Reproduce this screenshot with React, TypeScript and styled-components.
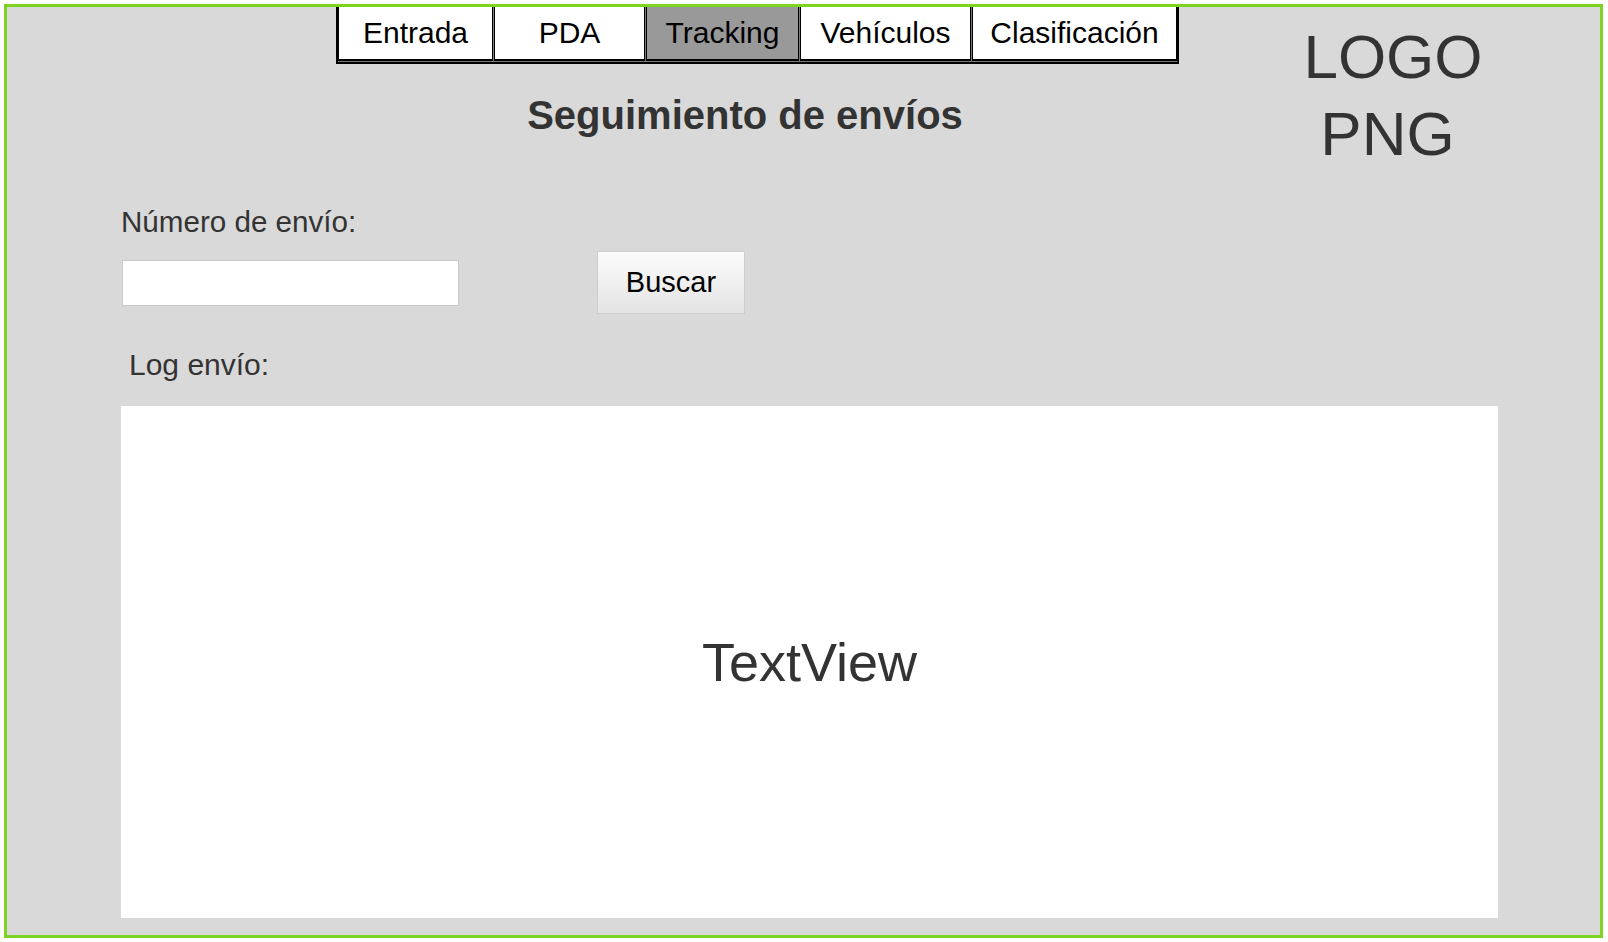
import React from "react";
import styled, { createGlobalStyle } from "styled-components";

const GlobalStyle = createGlobalStyle`
  html, body {
    margin: 0;
    padding: 0;
    background: #ffffff;
  }
  body {
    font-family: "Liberation Sans", Arial, sans-serif;
  }
  * { box-sizing: border-box; }
`;

const Frame = styled.div`
  margin: 4px 5px 4px 4px;
  height: 934px;
  border: 3px solid #7ed321;
  background: #d9d9d9;
  display: flex;
  flex-direction: column;
  color: #333333;
`;

const Header = styled.header`
  display: flex;
  align-items: flex-start;
  padding: 0 0 0 329px;
`;

const NavColumn = styled.div`
  display: flex;
  flex-direction: column;
  align-items: stretch;
`;

const TabBar = styled.nav`
  display: flex;
  gap: 1px;
  background: #7a7a7a;
  border: 2px solid #000;
  border-top: 0;
  padding: 0 0 1px;
`;

const Tab = styled.div<{ $w: number; $active?: boolean }>`
  width: ${(p) => p.$w}px;
  height: 54px;
  display: flex;
  align-items: center;
  justify-content: center;
  background: ${(p) => (p.$active ? "#999999" : "#ffffff")};
  border: 1px solid #000;
  border-top: 0;
  border-bottom-width: 2px;
  font-size: 30px;
  color: #000;
`;

const Title = styled.h1`
  margin: 28px 25px 0 0;
  font-size: 40px;
  font-weight: bold;
  text-align: center;
  line-height: 1.15;
  color: #333;
`;

const Logo = styled.div`
  margin: 11px 0 0 114px;
  width: 200px;
  text-align: center;
  font-size: 62px;
  line-height: 77px;
  color: #333;
`;

const LogoLine = styled.span<{ $shift?: number }>`
  display: block;
  margin-right: ${(p) => p.$shift ?? 0}px;
`;

const Form = styled.section`
  display: flex;
  flex-direction: column;
  padding: 0 102px 0 114px;
`;

const Label = styled.label<{ $indent?: number; $top: number; $size: number }>`
  display: block;
  margin-top: ${(p) => p.$top}px;
  margin-left: ${(p) => p.$indent ?? 0}px;
  font-size: ${(p) => p.$size}px;
  line-height: 1.15;
  color: #333;
`;

const SearchRow = styled.div`
  display: flex;
  align-items: center;
  gap: 138px;
  margin-top: 12px;
`;

const Input = styled.input`
  margin-left: 1px;
  width: 337px;
  height: 46px;
  border: 1px solid #c9c9c9;
  background: #fff;
  font-size: 24px;
  font-family: "Liberation Sans", Arial, sans-serif;
  outline: none;
`;

const Button = styled.button`
  width: 148px;
  height: 63px;
  border: 1px solid #cdcdcd;
  background: linear-gradient(#fbfbfb, #e4e4e4);
  font-family: "Liberation Sans", Arial, sans-serif;
  font-size: 29px;
  color: #000;
  padding: 0;
`;

const LogBox = styled.div`
  margin-top: 23px;
  height: 512px;
  background: #fff;
  display: flex;
  align-items: center;
  justify-content: center;
  font-size: 54px;
  color: #333;
`;

const tabs = [
  { label: "Entrada", w: 155 },
  { label: "PDA", w: 151 },
  { label: "Tracking", w: 153, active: true },
  { label: "Vehículos", w: 171 },
  { label: "Clasificación", w: 205 },
];

export default function App() {
  return (
    <>
      <GlobalStyle />
      <Frame>
        <Header>
          <NavColumn>
            <TabBar>
              {tabs.map((t) => (
                <Tab key={t.label} $w={t.w} $active={t.active}>
                  {t.label}
                </Tab>
              ))}
            </TabBar>
            <Title>Seguimiento de envíos</Title>
          </NavColumn>
          <Logo>
            <LogoLine>LOGO</LogoLine>
            <LogoLine $shift={11}>PNG</LogoLine>
          </Logo>
        </Header>
        <Form>
          <Label $top={33} $size={29.6}>Número de envío:</Label>
          <SearchRow>
            <Input type="text" />
            <Button>Buscar</Button>
          </SearchRow>
          <Label $top={34} $indent={8} $size={30}>Log envío:</Label>
          <LogBox>TextView</LogBox>
        </Form>
      </Frame>
    </>
  );
}
